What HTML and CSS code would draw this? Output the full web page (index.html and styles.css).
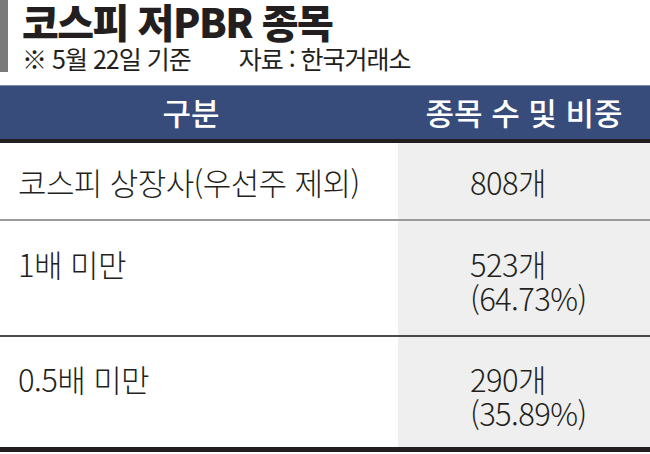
FILE: index.html
```html
<!DOCTYPE html>
<html lang="ko">
<head>
<meta charset="utf-8">
<link rel="stylesheet" href="styles.css">
</head>
<body>
<div class="page">
  <div class="top">
    <div class="bar"></div>
    <div class="titles">
      <h1 class="title">코스피 저PBR 종목</h1>
      <div class="sub"><span>※ 5월 22일 기준</span><span class="src">자료 : 한국거래소</span></div>
    </div>
  </div>
  <div class="table">
    <div class="row head">
      <div class="c1">구분</div>
      <div class="c2">종목 수 및 비중</div>
    </div>
    <div class="row r1">
      <div class="c1">코스피 상장사(우선주 제외)</div>
      <div class="c2">808개</div>
    </div>
    <div class="row r2">
      <div class="c1">1배 미만</div>
      <div class="c2"><div>523개</div><div>(64.73%)</div></div>
    </div>
    <div class="row r3">
      <div class="c1">0.5배 미만</div>
      <div class="c2"><div>290개</div><div>(35.89%)</div></div>
    </div>
  </div>
</div>
</body>
</html>
```

FILE: styles.css
```css
* { box-sizing: border-box; }
html, body { margin: 0; padding: 0; background: #fff; }
body {
  font-family: "Noto Sans CJK KR", "Noto Sans", sans-serif;
  color: #231f20;
  width: 650px;
  height: 454px;
  overflow: hidden;
}
.top {
  display: flex;
  height: 72px;
}
.bar {
  width: 8px;
  background: #7a7a7a;
}
.titles {
  padding-left: 14px;
}
.title {
  margin: 0;
  font-size: 40px;
  font-weight: 900;
  line-height: 42px;
  letter-spacing: -1.5px;
  height: 44px;
}
.sub {
  font-size: 25px;
  line-height: 28px;
  letter-spacing: -1px;
  display: flex;
  gap: 48px;
}
.table {
  margin-top: 13px;
}
.row {
  display: grid;
  grid-template-columns: 398px 1fr;
}
.row .c2 {
  background: #efefef;
}
.head {
  background: #384c7b;
  border-top: 1px solid #7d8db0;
  border-bottom: 4px solid #231f20;
  height: 58px;
  color: #fff;
  font-size: 31px;
  font-weight: 500;
  line-height: 52px;
  text-align: center;
}
.head .c2 { background: none; }
.head .c1 { padding-right: 16px; }
.r1, .r2, .r3 {
  font-size: 31px;
  font-weight: 300;
  line-height: 34px;
  letter-spacing: -0.6px;
}
.r1 .c1, .r2 .c1, .r3 .c1 { padding-left: 18px; }
.r1 .c2, .r2 .c2, .r3 .c2 { padding-left: 72px; }
.r1 { height: 78px; border-bottom: 2px solid #9a9a9a; }
.r1 > div { padding-top: 22px; }
.r2 { height: 116px; border-bottom: 2px solid #4a4a4a; }
.r2 > div { padding-top: 26px; }
.r3 { height: 115px; border-bottom: 5px solid #231f20; }
.r3 > div { padding-top: 25px; }
```
